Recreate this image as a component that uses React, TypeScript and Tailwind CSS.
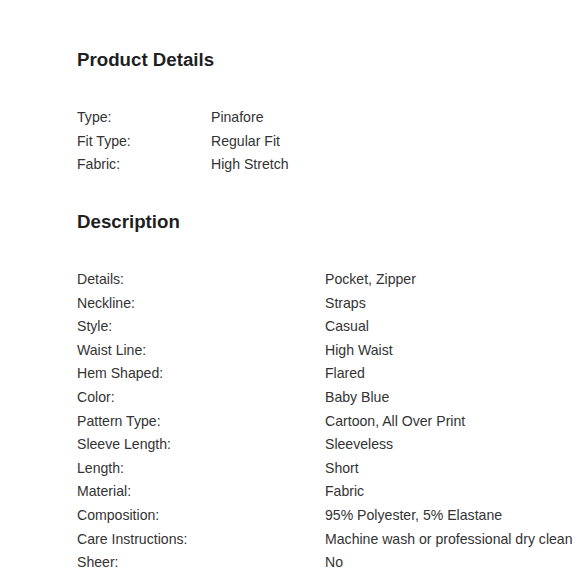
const productDetails: [string, string][] = [
  ["Type:", "Pinafore"],
  ["Fit Type:", "Regular Fit"],
  ["Fabric:", "High Stretch"],
];

const description: [string, string][] = [
  ["Details:", "Pocket, Zipper"],
  ["Neckline:", "Straps"],
  ["Style:", "Casual"],
  ["Waist Line:", "High Waist"],
  ["Hem Shaped:", "Flared"],
  ["Color:", "Baby Blue"],
  ["Pattern Type:", "Cartoon, All Over Print"],
  ["Sleeve Length:", "Sleeveless"],
  ["Length:", "Short"],
  ["Material:", "Fabric"],
  ["Composition:", "95% Polyester, 5% Elastane"],
  ["Care Instructions:", "Machine wash or professional dry clean"],
  ["Sheer:", "No"],
];

const SpecTable = ({ rows, labelWidth }: { rows: [string, string][]; labelWidth: string }) => (
  <div className="flex flex-col">
    {rows.map(([label, value]) => (
      <div key={label} className="flex h-[23.6px] items-center text-[14.1px] text-[#333]">
        <span className={labelWidth}>{label}</span>
        <span className="whitespace-nowrap">{value}</span>
      </div>
    ))}
  </div>
);

const App = () => {
  return (
    <div className="w-[580px] h-[580px] bg-white overflow-hidden font-['Liberation_Sans',Arial,sans-serif] pl-[77px] pt-[49px]">
      <h2 className="text-[18.7px] leading-[22px] font-bold text-[#1f1f1f]">Product Details</h2>
      <div className="mt-[35px]">
        <SpecTable rows={productDetails} labelWidth="w-[134px]" />
      </div>
      <h2 className="mt-[34px] text-[18.7px] leading-[22px] font-bold text-[#1f1f1f]">Description</h2>
      <div className="mt-[35px]">
        <SpecTable rows={description} labelWidth="w-[248px]" />
      </div>
    </div>
  );
};

export default App;
